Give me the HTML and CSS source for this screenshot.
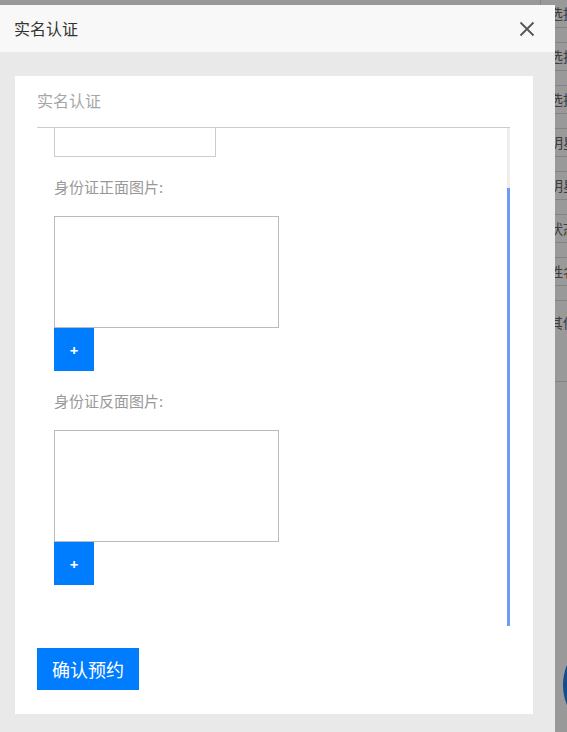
FILE: index.html
```html
<!DOCTYPE html>
<html lang="zh-CN">
<head>
    <meta charset="UTF-8">
    <meta name="viewport" content="width=device-width, initial-scale=1.0">
    <title>实名认证</title>
    <link rel="stylesheet" href="styles.css">
</head>
<body>
    <div class="page">
        <div class="list">
            <div class="row"><span>选择</span></div>
            <div class="row"><span>选择</span></div>
            <div class="row"><span>选择</span></div>
            <div class="row"><span>明星</span></div>
            <div class="row"><span>明星</span></div>
            <div class="row"><span>状态</span></div>
            <div class="row"><span>姓名</span></div>
            <div class="row row-last"><span>其他</span></div>
        </div>
    </div>
    <div class="float-btn"></div>

    <div class="shade"></div>
    <div class="layer">
        <div class="layer-title">
            实名认证
            <span class="layer-close">
                <svg width="16" height="16" viewBox="0 0 16 16">
                    <path d="M1.5 1.5 L14.5 14.5 M14.5 1.5 L1.5 14.5" stroke="#555" stroke-width="1.8" fill="none"/>
                </svg>
            </span>
        </div>
        <div class="layer-body">
            <div class="card">
                <div class="card-head">实名认证</div>
                <div class="form-wrap">
                    <div class="form-scroll" id="formScroll">
                        <div class="field field-first">
                            <input type="text" class="text-input">
                        </div>
                        <div class="field">
                            <label>身份证正面图片:</label>
                            <div class="pic"></div>
                            <button class="add">+</button>
                        </div>
                        <div class="field">
                            <label>身份证反面图片:</label>
                            <div class="pic"></div>
                            <button class="add">+</button>
                        </div>
                    </div>
                    <div class="scroll-bar"><div class="scroll-thumb"></div></div>
                </div>
                <button class="submit">确认预约</button>
            </div>
        </div>
    </div>

    <script>
        // form opens scrolled to the upload fields
        document.getElementById('formScroll').scrollTop = 9999;
    </script>
</body>
</html>
```

FILE: styles.css
```css
body {
    margin: 0;
    padding: 0;
    background: #fff;
    font-family: "Noto Sans CJK SC", "Noto Sans", sans-serif;
    color: #333;
}
.page {
    padding-left: 540px;
}
.list {
    border-left: 1px solid #ddd;
    width: 200px;
}
.row {
    padding-left: 8px;
    font-size: 14px;
    color: #666;
    white-space: nowrap;
    border-bottom: 1px solid #ddd;
}
.row span {
    display: block;
    height: 27px;
    line-height: 27px;
    border-bottom: 1px solid #ddd;
    margin-bottom: 14px;
}
.row-last span {
    height: 80px;
    line-height: 42px;
    border-bottom: none;
    margin-bottom: 0;
}
.float-btn {
    position: fixed;
    left: 563px;
    top: 633px;
    width: 104px;
    height: 104px;
    border-radius: 50%;
    background: #2080ea;
}
.shade {
    position: fixed;
    top: 0;
    left: 0;
    right: 0;
    bottom: 0;
    background: rgba(0, 0, 0, 0.4);
}
.layer {
    position: fixed;
    top: 5px;
    left: 0;
    width: 555px;
    bottom: 0;
    background: #e9e9e9;
    display: flex;
    flex-direction: column;
}
.layer-title {
    height: 47px;
    line-height: 47px;
    padding-left: 14px;
    background: #f8f8f8;
    font-size: 16px;
    color: #333;
    display: flex;
    justify-content: space-between;
    align-items: center;
}
.layer-close {
    display: flex;
    margin-right: 20px;
    margin-top: 1px;
}
.layer-body {
    padding: 24px 22px 0 15px;
}
.card {
    background: #fff;
    padding: 0 23px 24px 22px;
}
.card-head {
    height: 51px;
    line-height: 48px;
    font-size: 16px;
    color: #a6a6a6;
    border-bottom: 1px solid #ccc;
}
.form-wrap {
    display: flex;
    height: 498px;
}
.form-scroll {
    flex: 1;
    overflow-y: auto;
    scrollbar-width: none;
    padding: 25px 0 41px 17px;
    box-sizing: border-box;
}
.scroll-bar {
    width: 3px;
    background: #eee;
}
.scroll-thumb {
    margin-top: 60px;
    height: 438px;
    background: #6e9cf5;
}
.field {
    margin-bottom: 20px;
}
.field:last-child {
    margin-bottom: 0;
}
.field-first {
    padding-top: 39px;
}
.field label {
    display: block;
    height: 20px;
    line-height: 20px;
    font-size: 15px;
    color: #999;
    margin-bottom: 19px;
}
.text-input {
    display: block;
    width: 162px;
    height: 32px;
    box-sizing: border-box;
    border: 1px solid #ccc;
    margin: 0;
    padding: 0 8px;
    outline: none;
}
.pic {
    width: 225px;
    height: 112px;
    box-sizing: border-box;
    border: 1px solid #bbb;
}
.add {
    display: block;
    width: 40px;
    height: 43px;
    border: none;
    margin: 0;
    padding: 0;
    background: #007cff;
    color: #fff;
    font-size: 15px;
    font-weight: bold;
    font-family: "Noto Sans", sans-serif;
}
.submit {
    display: block;
    margin-top: 22px;
    height: 42px;
    padding: 0 15px;
    border: none;
    background: #007cff;
    color: #fff;
    font-size: 18px;
    font-family: "Noto Sans CJK SC", sans-serif;
}
```
